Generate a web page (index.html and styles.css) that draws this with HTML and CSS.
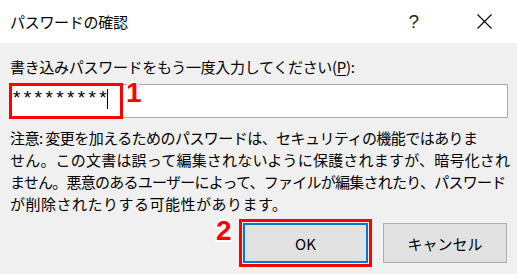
FILE: index.html
```html
<!DOCTYPE html>
<html lang="ja">
<head>
<meta charset="utf-8">
<link rel="stylesheet" href="styles.css">
</head>
<body>
<div class="dialog">
  <header class="titlebar">
    <span class="title">パスワードの確認</span>
    <span class="help">?</span>
    <svg class="close" width="15" height="15" viewBox="0 0 15 15"><path d="M0.5 0.5 L14.5 14.5 M14.5 0.5 L0.5 14.5" stroke="#000" stroke-width="1.1" fill="none"/></svg>
  </header>
  <main class="content">
    <label class="prompt">書き込みパスワードをもう一度入力してください(<u>P</u>):</label>
    <div class="field-wrap">
      <div class="field"><span class="mask">*********</span><span class="caret"></span></div>
      <div class="mark mark-1"></div>
      <span class="num num-1">1</span>
    </div>
    <p class="note">
      <span class="line line-1">注意: 変更を加えるためのパスワードは、セキュリティの機能ではありま</span>
      <span class="line line-2">せん。この文書は誤って編集されないように保護されますが、暗号化され</span>
      <span class="line line-3">ません。悪意のあるユーザーによって、ファイルが編集されたり、パスワード</span>
      <span class="line line-4">が削除されたりする可能性があります。</span>
    </p>
    <div class="actions">
      <span class="num num-2">2</span>
      <button class="btn btn-ok">OK</button>
      <button class="btn btn-cancel">キャンセル</button>
    </div>
  </main>
</div>
</body>
</html>
```

FILE: styles.css
```css
html, body {
  margin: 0;
  padding: 0;
}
body {
  background: #f0f0f0;
  font-family: "Noto Sans CJK JP", "Noto Sans", sans-serif;
  color: #000;
  width: 517px;
  height: 274px;
  overflow: hidden;
}
.dialog {
  display: flex;
  flex-direction: column;
}
.titlebar {
  height: 43px;
  background: #fff;
  display: flex;
  align-items: center;
  padding: 0 25px 0 10px;
}
.title {
  font-size: 15px;
  letter-spacing: -0.3px;
  line-height: 20px;
}
.help {
  margin-left: auto;
  margin-right: 58px;
  font-size: 19px;
  line-height: 20px;
  font-family: "Liberation Sans", sans-serif;
  color: #222;
}
.close {
  display: block;
}
.content {
  padding: 14px 9px 0 10px;
  display: flex;
  flex-direction: column;
}
.prompt {
  display: block;
  font-size: 15px;
  line-height: 20px;
  letter-spacing: -0.3px;
}
.prompt u {
  text-underline-offset: 2px;
}
.field-wrap {
  position: relative;
  margin-top: 7px;
}
.field {
  height: 34px;
  box-sizing: border-box;
  border: 1px solid #a9a9a9;
  background: #fff;
  display: flex;
  align-items: flex-start;
  padding: 4px 0 0 2px;
}
.mask {
  font-family: "Liberation Sans", sans-serif;
  font-size: 19px;
  line-height: 18px;
  letter-spacing: 3.4px;
}
.caret {
  width: 1px;
  height: 20px;
  background: #000;
  margin-left: -3px;
}
.mark {
  position: absolute;
  box-sizing: border-box;
  border: 3px solid #f00;
}
.mark-1 {
  left: -1px;
  top: -1px;
  width: 114px;
  height: 36px;
}
.num {
  position: absolute;
  font-family: "Liberation Sans", sans-serif;
  font-weight: bold;
  font-size: 28px;
  line-height: 28px;
  color: #f00;
  text-shadow: 2px 0 0 #fff, -2px 0 0 #fff, 0 2px 0 #fff, 0 -2px 0 #fff,
    1.5px 1.5px 0 #fff, -1.5px 1.5px 0 #fff, 1.5px -1.5px 0 #fff, -1.5px -1.5px 0 #fff;
}
.num-1 {
  left: 116px;
  top: -5px;
}
.note {
  margin: 9px 0 0;
  font-size: 15px;
  line-height: 22px;
  white-space: nowrap;
}
.line {
  display: block;
}
.line-1 {
  letter-spacing: -0.55px;
}
.line-2 {
  letter-spacing: 0.2px;
}
.line-3 {
  letter-spacing: -0.75px;
}
.line-4 {
  letter-spacing: 0.5px;
}
.actions {
  position: relative;
  margin-top: 8px;
  display: flex;
  justify-content: flex-end;
  gap: 15px;
  padding-right: 1px;
}
.num-2 {
  left: 206px;
  top: -6px;
}
.btn {
  height: 40px;
  box-sizing: border-box;
  background: #e1e1e1;
  font-family: "Noto Sans CJK JP", "Noto Sans", sans-serif;
  font-size: 15px;
  color: #000;
  padding: 0;
  margin: 0;
}
.btn-ok {
  width: 125px;
  border: 2px solid #0078d7;
  outline: 3px solid #f00;
  outline-offset: 1px;
}
.btn-cancel {
  width: 124px;
  border: 1px solid #adadad;
}
```
